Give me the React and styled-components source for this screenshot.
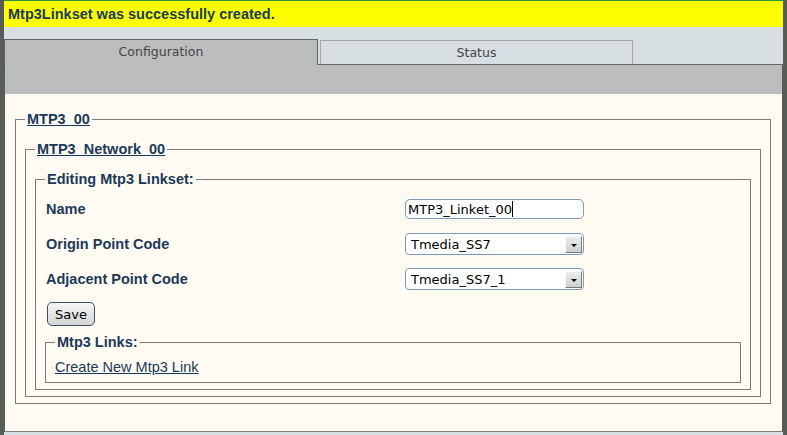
import React from "react";
import styled, { createGlobalStyle } from "styled-components";

const navy = "#1b3a59";
const sans = `"Liberation Sans", Arial, sans-serif`;
const deja = `"DejaVu Sans", Verdana, sans-serif`;
const lineGray = "#7b7b7b";

const GlobalStyle = createGlobalStyle`
  html, body {
    margin: 0;
    padding: 0;
    background: #585d58;
  }
  body {
    font-family: ${sans};
  }
`;

const Page = styled.div`
  margin-left: 4px;
  width: 779px;
  min-height: 435px;
  background: #d8dfe3;
`;

const Message = styled.div`
  height: 26px;
  border-top: 1px solid #23983c;
  background: #ffff00;
  color: ${navy};
  font: bold 14.5px/26px ${sans};
  padding-left: 4px;
`;

const TabBar = styled.div`
  display: flex;
  align-items: flex-end;
  margin-top: 12px;
  height: 25px;
  border-bottom: 1px solid #666;
`;

const Tab = styled.div`
  box-sizing: border-box;
  width: ${(p) => p.$width}px;
  margin-left: ${(p) => (p.$active ? 0 : 2)}px;
  height: ${(p) => (p.$active ? 26 : 24)}px;
  margin-bottom: ${(p) => (p.$active ? -1 : 0)}px;
  background: ${(p) => (p.$active ? "#bcbdbf" : "#d8dfe3")};
  border: 1px solid ${(p) => (p.$active ? "#666" : "#a5a5a5")};
  border-bottom: none;
  color: #444;
  font: 12.5px/23px ${deja};
  text-align: center;
`;

const Frame = styled.div`
  border-left: 1px solid #585d58;
  border-right: 1px solid #585d58;
  border-bottom: 1px solid #808080;
`;

const GrayBand = styled.div`
  height: 29px;
  background: #bcbdbf;
`;

const Content = styled.div`
  background: #fffbf2;
  padding: 16.5px 11px 27px 10px;
`;

const Fieldset = styled.fieldset`
  margin: ${(p) => p.$mt || 0}px 0 0 0;
  padding: ${(p) => p.$pt}px 9px ${(p) => p.$pb}px 9px;
  border: 1px solid ${lineGray};
  min-width: 0;
`;

const Legend = styled.legend`
  padding: 0 2px;
  color: ${navy};
  font: bold 14.5px/17px ${sans};
`;

const LegendLink = styled.a`
  color: ${navy};
  text-decoration: underline;
`;

const FormGrid = styled.div`
  display: grid;
  grid-template-columns: 360px 1fr;
  grid-auto-rows: 35px;
  align-items: center;
`;

const Label = styled.div`
  padding-left: 1px;
  color: ${navy};
  font: bold 14.5px/17px ${sans};
`;

const InputBox = styled.div`
  box-sizing: border-box;
  display: flex;
  align-items: center;
  width: 179px;
  height: 20px;
  padding: 0 2px;
  border: 1px solid #7f9ab5;
  border-radius: 5px;
  background: #fff;
  color: #000;
  font: 13px ${deja};
`;

const Caret = styled.span`
  display: inline-block;
  width: 1px;
  height: 16px;
  background: #000;
`;

const FakeSelect = styled.div`
  box-sizing: border-box;
  display: flex;
  align-items: center;
  width: 179px;
  height: 22px;
  padding-left: 5px;
  border: 1px solid #7f9ab5;
  border-radius: 4px;
  background: #fff;
  color: #000;
  font: 13px ${deja};
`;

const ArrowBox = styled.span`
  box-sizing: border-box;
  display: flex;
  align-items: center;
  justify-content: center;
  margin-left: auto;
  margin-right: 1px;
  width: 17px;
  height: 17px;
  background: linear-gradient(#ececec, #cfcfcf);
  border-top: 1px solid #fafafa;
  border-left: 1px solid #fafafa;
  border-right: 1px solid #7a7a7a;
  border-bottom: 1px solid #7a7a7a;

  &::after {
    content: "";
    border-left: 3px solid transparent;
    border-right: 3px solid transparent;
    border-top: 3px solid #000;
    margin-top: 2px;
  }
`;

const SaveButton = styled.button`
  display: block;
  box-sizing: border-box;
  margin: 5.5px 0 0 2px;
  width: 48px;
  height: 24px;
  padding: 0;
  border: 1px solid #3f4d5e;
  border-radius: 5px;
  background: linear-gradient(#f6f6f6, #d2d4d6);
  color: #000;
  font: 13px ${deja};
`;

const CreateLink = styled.a`
  display: block;
  color: ${navy};
  font: 14.5px/17px ${sans};
  text-decoration: underline;
`;

const Select = ({ value }) => (
  <FakeSelect>
    <span>{value}</span>
    <ArrowBox />
  </FakeSelect>
);

const App = () => (
  <>
    <GlobalStyle />
    <Page>
      <Message>Mtp3Linkset was successfully created.</Message>
      <TabBar>
        <Tab $active $width={314}>Configuration</Tab>
        <Tab $width={313}>Status</Tab>
      </TabBar>
      <Frame>
        <GrayBand />
        <Content>
          <Fieldset $pt={13} $pb={6}>
            <Legend>
              <LegendLink href="#">MTP3_00</LegendLink>
            </Legend>
            <Fieldset $pt={13} $pb={6}>
              <Legend>
                <LegendLink href="#">MTP3_Network_00</LegendLink>
              </Legend>
              <Fieldset $pt={4} $pb={6}>
                <Legend>Editing Mtp3 Linkset:</Legend>
                <FormGrid>
                  <Label>Name</Label>
                  <div>
                    <InputBox>
                      MTP3_Linket_00
                      <Caret />
                    </InputBox>
                  </div>
                  <Label>Origin Point Code</Label>
                  <div>
                    <Select value="Tmedia_SS7" />
                  </div>
                  <Label>Adjacent Point Code</Label>
                  <div>
                    <Select value="Tmedia_SS7_1" />
                  </div>
                </FormGrid>
                <SaveButton>Save</SaveButton>
                <Fieldset $mt={8} $pt={8} $pb={6}>
                  <Legend>Mtp3 Links:</Legend>
                  <CreateLink href="#">Create New Mtp3 Link</CreateLink>
                </Fieldset>
              </Fieldset>
            </Fieldset>
          </Fieldset>
        </Content>
      </Frame>
    </Page>
  </>
);

export default App;
